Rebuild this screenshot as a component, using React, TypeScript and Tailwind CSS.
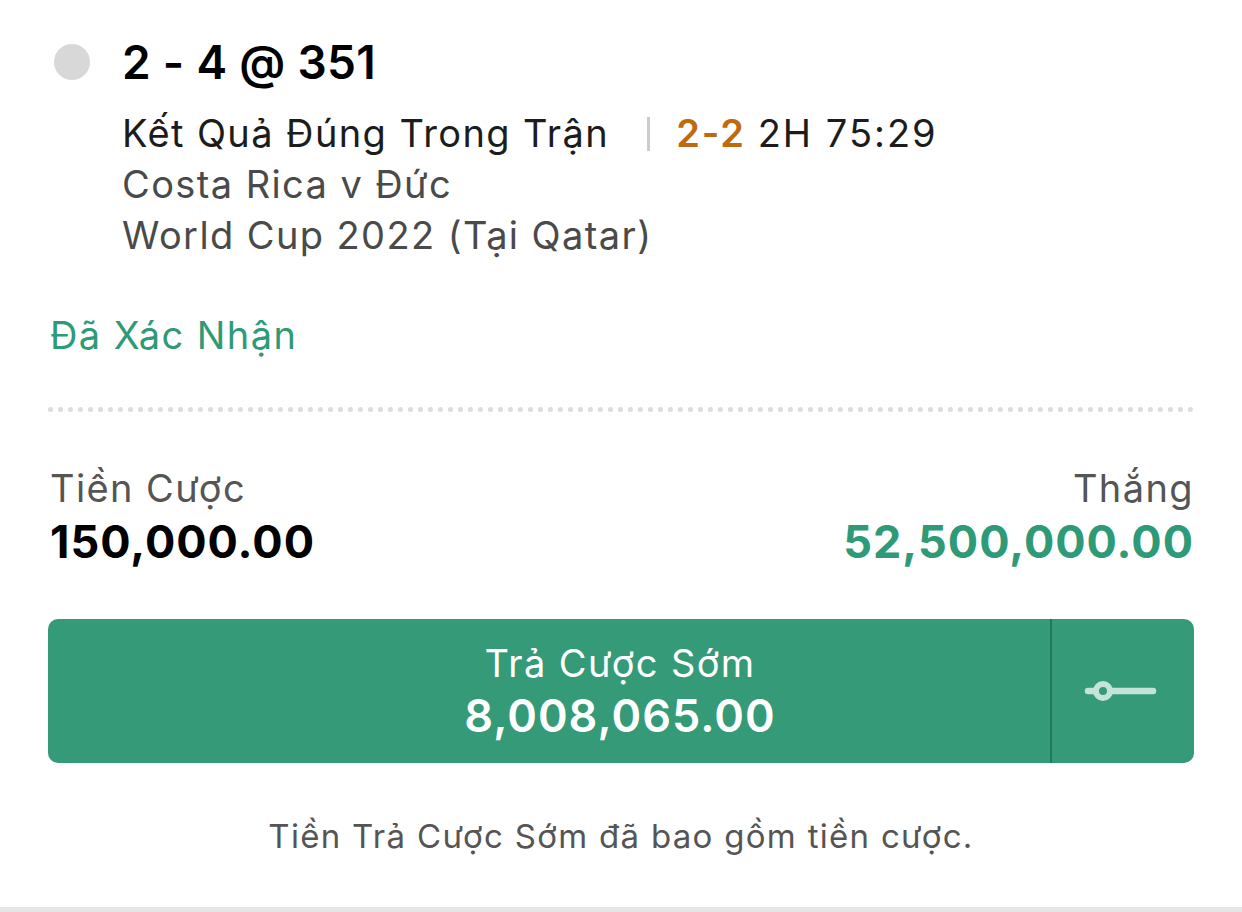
import React from "react";

const font = { fontFamily: "Inter, 'Noto Sans', sans-serif" };

const CashOutIcon = () => (
  <svg width="80" height="40" viewBox="0 0 80 40" fill="none">
    <line x1="27" y1="20" x2="70" y2="20" stroke="#c2e5d8" strokeWidth="6.5" strokeLinecap="round" />
    <line x1="5" y1="20" x2="13" y2="20" stroke="#c2e5d8" strokeWidth="6.5" strokeLinecap="round" />
    <circle cx="20" cy="20" r="7" stroke="#c2e5d8" strokeWidth="6" fill="#359a78" />
  </svg>
);

export default function App() {
  return (
    <div className="w-[1242px] h-[912px] bg-white flex flex-col" style={font}>
      <div className="flex-1 px-[48px] pt-[34px]">
        {/* selection */}
        <div className="flex items-start">
          <div className="w-[74px] pt-[10px] pl-[6px]">
            <div className="w-[36px] h-[36px] rounded-full bg-[#d8d8d8]" />
          </div>
          <div>
            <div className="text-[46px] leading-[56px] font-semibold tracking-[0.3px] text-black">2 - 4 @ 351</div>
            <div className="mt-[18px] text-[38px] leading-[51px] tracking-[1.4px] text-[#1c1c1c] flex items-center">
              <span>Kết Quả Đúng Trong Trận</span>
              <span className="ml-[38px] w-[3px] h-[34px] bg-[#cccccc]" />
              <span className="ml-[26px] font-semibold tracking-[1.8px] text-[#c06a10]">2-2</span>
              <span className="ml-[12px] tracking-[2px]">2H 75:29</span>
            </div>
            <div className="text-[38px] leading-[51px] tracking-[1.4px] text-[#4a4a4a]">Costa Rica v Đức</div>
            <div className="text-[38px] leading-[51px] tracking-[1.4px] text-[#4a4a4a]">World Cup 2022 (Tại Qatar)</div>
          </div>
        </div>

        <div className="mt-[50px] pl-[2px] text-[38px] leading-[48px] tracking-[1.4px] text-[#2f9a77]">Đã Xác Nhận</div>

        <div className="mt-[48px] border-t-[5px] border-dotted border-[#dcdcdc]" />

        {/* stake / win */}
        <div className="mt-[50px] flex justify-between">
          <div className="pl-[2px]">
            <div className="text-[38px] leading-[52px] tracking-[1.4px] text-[#555555]">Tiền Cược</div>
            <div className="text-[45px] leading-[56px] font-bold tracking-[1px] text-black">150,000.00</div>
          </div>
          <div className="text-right">
            <div className="text-[38px] leading-[52px] tracking-[1.4px] text-[#555555]">Thắng</div>
            <div className="text-[45px] leading-[56px] font-bold tracking-[1px] text-[#2f9a77]">52,500,000.00</div>
          </div>
        </div>

        {/* cash out button */}
        <div className="mt-[49px] h-[144px] rounded-[10px] bg-[#359a78] flex overflow-hidden">
          <div className="flex-1 pl-[142px] flex flex-col items-center justify-center text-white">
            <div className="text-[38px] leading-[50px] tracking-[1.4px]">Trả Cược Sớm</div>
            <div className="text-[45px] leading-[56px] font-semibold tracking-[1px]">8,008,065.00</div>
          </div>
          <div className="w-[2px] bg-[#1f7a5b]" />
          <div className="w-[142px] flex items-center justify-center">
            <CashOutIcon />
          </div>
        </div>

        <div className="mt-[53px] text-center text-[33px] leading-[40px] tracking-[1.3px] text-[#555555]">
          Tiền Trả Cược Sớm đã bao gồm tiền cược.
        </div>
      </div>
      <div className="h-[5px] bg-[#e6e6e6]" />
    </div>
  );
}
